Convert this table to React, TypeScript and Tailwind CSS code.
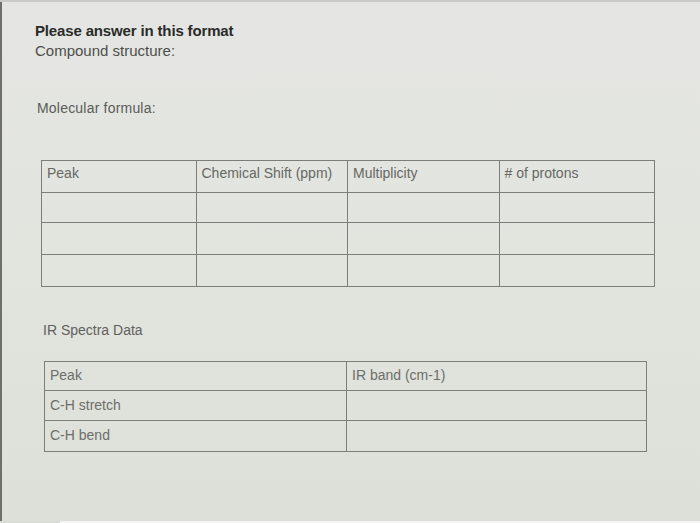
const nmrHeaders = ['Peak', 'Chemical Shift (ppm)', 'Multiplicity', '# of protons'];
const nmrWidths = ['w-[154px]', 'w-[152px]', 'w-[152px]', 'w-[156px]'];
const nmrRowHeights = ['h-[30px]', 'h-[32px]', 'h-[31px]'];

const irRows = ['C-H stretch', 'C-H bend'];

function NmrTable(): JSX.Element {
  return (
    <div className="ml-[39px] mt-[42px] w-[614px] border border-[#7c7f79]">
      <div className="flex h-[32px] border-b border-[#7c7f79]">
        {nmrHeaders.map((label, i) => (
          <div
            key={label}
            className={`${nmrWidths[i]} ${i > 0 ? 'border-l border-[#7c7f79]' : ''} px-[5px] pt-[4px] text-[14px] leading-4 text-[#666864]`}
          >
            {label}
          </div>
        ))}
      </div>
      {nmrRowHeights.map((h, r) => (
        <div
          key={r}
          className={`flex ${h} ${r < nmrRowHeights.length - 1 ? 'border-b border-[#7c7f79]' : ''}`}
        >
          {nmrWidths.map((w, i) => (
            <div key={i} className={`${w} ${i > 0 ? 'border-l border-[#7c7f79]' : ''}`} />
          ))}
        </div>
      ))}
    </div>
  );
}

function IrTable(): JSX.Element {
  return (
    <div className="ml-[42px] mt-[21px] w-[603px] border border-[#7c7f79] text-[14px] leading-4 text-[#6c6e6a]">
      <div className="flex h-[29px] border-b border-[#7c7f79]">
        <div className="w-[301px] px-[5px] pt-[5px]">Peak</div>
        <div className="flex-1 border-l border-[#7c7f79] px-[5px] pt-[5px]">IR band (cm-1)</div>
      </div>
      {irRows.map((label, r) => (
        <div
          key={label}
          className={`flex h-[30px] ${r < irRows.length - 1 ? 'border-b border-[#7c7f79]' : ''}`}
        >
          <div className="w-[301px] px-[5px] pt-[6px]">{label}</div>
          <div className="flex-1 border-l border-[#7c7f79]" />
        </div>
      ))}
    </div>
  );
}

export default function App(): JSX.Element {
  return (
    <div className="flex h-[523px] w-[700px] flex-col overflow-hidden bg-[#d9dcd4]">
      <div className="h-[2px] bg-[#c9cac6]" />
      <div className="flex flex-1">
        <div className="w-[2px] bg-[#6e6f6a]" />
        <div className="flex-1 bg-linear-to-b from-[#e5e6e3] via-[#e2e4de] to-[#dde0d8] font-['Liberation_Sans',Arial,sans-serif]">
          <div className="pt-[19px]">
            <p className="ml-[33px] text-[15px] font-bold leading-5 tracking-[-0.15px] text-[#2a2b29]">
              Please answer in this format
            </p>
            <p className="ml-[33px] text-[15px] leading-5 text-[#4d4e4b]">Compound structure:</p>
            <p className="ml-[35px] mt-[37px] text-[14px] leading-5 tracking-[0.2px] text-[#5a5c58]">
              Molecular formula:
            </p>
            <NmrTable />
            <p className="ml-[41px] mt-[33px] text-[14px] leading-5 text-[#5f615d]">IR Spectra Data</p>
            <IrTable />
          </div>
        </div>
      </div>
      <div className="ml-[60px] h-[2px] bg-[#f4f4f2]" />
    </div>
  );
}
